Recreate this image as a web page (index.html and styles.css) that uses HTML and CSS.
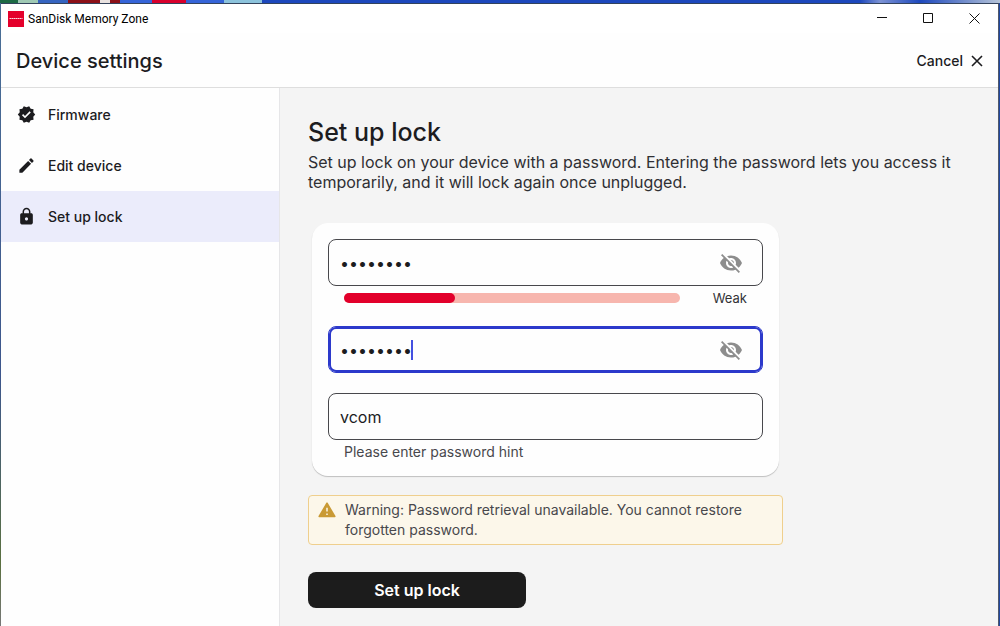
FILE: index.html
```html
<!DOCTYPE html>
<html lang="en">
<head>
<meta charset="utf-8">
<meta name="viewport" content="width=device-width, initial-scale=1">
<title>SanDisk Memory Zone</title>
<link rel="stylesheet" href="styles.css">
</head>
<body>
<div class="desktop">
  <div class="window">
    <div class="titlebar">
      <svg class="app-logo" viewBox="0 0 16 16" aria-hidden="true"><path fill="#e4002b" d="M0 0h16v16H0z"/><path stroke="#fff" stroke-opacity=".85" stroke-width="1.2" stroke-dasharray="1.6 .4" d="M1.500 7.500h13"/></svg>
      <span class="app-name">SanDisk Memory Zone</span>
      <div class="window-controls">
        <button class="window-button" type="button" aria-label="Minimize"><svg viewBox="0 0 11 11"><path d="M0 4.500h10"/></svg></button>
        <button class="window-button" type="button" aria-label="Maximize"><svg viewBox="0 0 11 11"><path d="M.5.5h9v9h-9z"/></svg></button>
        <button class="window-button" type="button" aria-label="Close"><svg viewBox="0 0 11 11"><path d="M.5.5l10 10M10.500.5l-10 10"/></svg></button>
      </div>
    </div>
    <header class="header">
      <h1 class="header-title">Device settings</h1>
      <button class="cancel" type="button">Cancel<svg viewBox="0 0 12 12" aria-hidden="true"><path d="M1 1l10 10M11 1L1 11"/></svg></button>
    </header>
    <div class="body">
      <nav class="sidebar">
        <a class="nav-item" href="#firmware"><svg viewBox="0 0 24 24" aria-hidden="true"><path d="M23 12l-2.440-2.790.34-3.690-3.610-.82-1.890-3.200L12 2.960 8.600 1.500 6.710 4.690 3.100 5.500l.34 3.700L1 12l2.440 2.790-.34 3.700 3.610.82L8.600 22.500l3.400-1.470 3.400 1.460 1.890-3.190 3.610-.82-.34-3.690L23 12zm-12.910 4.720l-3.800-3.810 1.480-1.480 2.320 2.330 5.850-5.870 1.480 1.480-7.330 7.350z"/></svg>Firmware</a>
        <a class="nav-item" href="#edit"><svg viewBox="0 0 24 24" aria-hidden="true"><path d="M3 17.250V21h3.750L17.810 9.940l-3.750-3.750L3 17.250zM20.710 7.040a1 1 0 000-1.410l-2.340-2.340a1 1 0 00-1.410 0l-1.830 1.830 3.750 3.750 1.830-1.830z"/></svg>Edit device</a>
        <a class="nav-item selected" href="#lock" aria-current="page"><svg viewBox="0 0 24 24" aria-hidden="true"><path d="M18 8h-1V6c0-2.760-2.240-5-5-5S7 3.240 7 6v2H6c-1.100 0-2 .9-2 2v10c0 1.100.9 2 2 2h12c1.100 0 2-.9 2-2V10c0-1.100-.9-2-2-2zm-6 9c-1.100 0-2-.9-2-2s.9-2 2-2 2 .9 2 2-.9 2-2 2zm3.100-9H8.900V6c0-1.710 1.390-3.100 3.100-3.100s3.100 1.390 3.100 3.100v2z"/></svg>Set up lock</a>
      </nav>
      <main class="main">
        <h2 class="title">Set up lock</h2>
        <p class="intro">Set up lock on your device with a password. Entering the password lets you access it temporarily, and it will lock again once unplugged.</p>
        <form class="form">
          <div class="card">
            <div class="field">
              <input class="input" type="password" value="password" aria-label="Password">
              <button class="reveal" type="button" aria-label="Show password"><svg viewBox="0 0 24 24"><path d="M12 7c2.760 0 5 2.240 5 5 0 .65-.13 1.260-.36 1.830l2.920 2.920c1.510-1.260 2.700-2.890 3.430-4.750-1.730-4.390-6-7.500-11-7.500-1.400 0-2.740.25-3.980.7l2.160 2.160C10.740 7.130 11.350 7 12 7zM2 4.270l2.280 2.280.46.46C3.080 8.300 1.780 10.020 1 12c1.730 4.390 6 7.500 11 7.500 1.550 0 3.030-.3 4.380-.84l.42.42L19.730 22 21 20.730 3.270 3 2 4.270zM7.530 9.800l1.550 1.550c-.05.21-.08.43-.08.65 0 1.660 1.340 3 3 3 .22 0 .44-.03.65-.08l1.550 1.550c-.67.33-1.410.53-2.200.53-2.760 0-5-2.240-5-5 0-.79.2-1.530.53-2.200zm4.310-.78l3.150 3.150.02-.16c0-1.660-1.340-3-3-3l-.17.01z"/></svg></button>
            </div>
            <div class="strength">
              <div class="meter" role="meter" aria-label="Password strength" aria-valuemin="0" aria-valuemax="3" aria-valuenow="1"><div class="meter-fill" style="width:33%"></div></div>
              <span class="strength-label">Weak</span>
            </div>
            <div class="field focused">
              <input class="input" type="password" value="password" aria-label="Confirm password">
              <span class="caret"></span>
              <button class="reveal" type="button" aria-label="Show password"><svg viewBox="0 0 24 24"><path d="M12 7c2.760 0 5 2.240 5 5 0 .65-.13 1.260-.36 1.830l2.920 2.920c1.510-1.260 2.700-2.890 3.430-4.750-1.730-4.390-6-7.500-11-7.500-1.400 0-2.740.25-3.980.7l2.160 2.160C10.740 7.130 11.350 7 12 7zM2 4.270l2.280 2.280.46.46C3.080 8.300 1.780 10.020 1 12c1.730 4.390 6 7.500 11 7.500 1.550 0 3.030-.3 4.380-.84l.42.42L19.730 22 21 20.730 3.270 3 2 4.270zM7.530 9.800l1.550 1.550c-.05.21-.08.43-.08.65 0 1.660 1.340 3 3 3 .22 0 .44-.03.65-.08l1.550 1.550c-.67.33-1.410.53-2.200.53-2.760 0-5-2.240-5-5 0-.79.2-1.530.53-2.200zm4.310-.78l3.150 3.150.02-.16c0-1.660-1.340-3-3-3l-.17.01z"/></svg></button>
            </div>
            <div class="field hint">
              <input class="input" id="hint" type="text" value="vcom">
            </div>
            <label class="helper" for="hint">Please enter password hint</label>
          </div>
          <div class="warning">
            <svg viewBox="0 0 24 24" aria-hidden="true"><path d="M1.500 21.500c-.8 0-1.200-.7-.8-1.400l10.200-17.400c.5-.8 1.700-.8 2.200 0l10.200 17.400c.4.7 0 1.400-.8 1.400zM11 9v5h2V9zm0 7.500v2h2v-2z" fill-rule="evenodd"/></svg>
            <p class="warning-text">Warning: Password retrieval unavailable. You cannot restore forgotten password.</p>
          </div>
          <button class="submit" type="button">Set up lock</button>
        </form>
      </main>
    </div>
  </div>
</div>
</body>
</html>
```
FILE: styles.css
```css
* { box-sizing: border-box; }

body {
  margin: 0;
  font-family: Inter, "Liberation Sans", sans-serif;
  font-size: 16px;
  color: #1c1c1f;
}

button, input { font: inherit; color: inherit; }
button { border: 0; padding: 0; background: none; }
h1, h2, p { margin: 0; }
svg { display: block; flex: none; }

.desktop {
  min-height: 100vh;
  display: flex;
  padding: 3px 1px 0 0;
  background:
    linear-gradient(90deg, #1d6b45 0 18px, #9fc9b4 18px 38px, #3564c0 38px 68px, #8c1018 68px 100px, #e9e2e0 100px 110px, #8c1018 110px 120px, #3564d8 120px 152px, #d8002c 152px 186px, #3564d8 186px 224px, #8cc3dc 224px 262px, #1d48bd 262px 860px, #7d93d4 880px, #1d48bd 920px, #b6c4d8 100%) top / 100% 3px no-repeat,
    linear-gradient(#4a6f96, #3d568c 60%, #5a7040 90%, #777) left / 2px 100% no-repeat,
    #1f479f;
}

.window {
  flex: 1;
  min-width: 0;
  display: flex;
  flex-direction: column;
  margin-left: 1px;
  border-top: 1px solid #33435c;
  border-right: 1px solid #50586a;
  background: #fefefe;
}

.titlebar {
  display: flex;
  align-items: center;
  height: 29px;
  padding-left: 7px;
  background: #fff;
}

.app-logo { width: 16px; height: 16px; }

.app-name {
  margin-left: 4px;
  font: 12px/16px Roboto, sans-serif;
  color: #000;
}

.window-controls { display: flex; margin-left: auto; padding-right: 1px; }

.window-button {
  display: grid;
  place-items: center;
  width: 46px;
  height: 28px;
}

.window-button svg {
  width: 11px;
  height: 11px;
  fill: none;
  stroke: #111;
}

.header {
  display: flex;
  align-items: center;
  justify-content: space-between;
  height: 55px;
  padding: 1px 15px 0 15px;
  border-bottom: 1px solid #dedede;
}

.header-title { font-size: 20px; line-height: 24px; font-weight: 500; }

.cancel {
  display: flex;
  align-items: center;
  gap: 8px;
  font-size: 14px;
  font-weight: 500;
}

.cancel svg { width: 12px; height: 12px; fill: none; stroke: #1c1c1f; stroke-width: 1.6; }

.body { flex: 1; display: flex; }

.sidebar {
  flex: none;
  width: 279px;
  padding-top: 1px;
  border-right: 1px solid #e6e6e8;
}

.nav-item {
  display: flex;
  align-items: center;
  gap: 12px;
  height: 51px;
  padding-left: 16px;
  font-size: 14px;
  font-weight: 500;
  color: #1c1c1f;
  text-decoration: none;
}

.nav-item svg { width: 19px; height: 19px; fill: #1c1c1f; }
.selected { background: #ebecfb; }

.main {
  flex: 1;
  min-width: 0;
  padding: 29px 28px 18px;
  background: #f4f4f4;
}

.title { font-size: 25px; line-height: 30px; font-weight: 500; }

.intro {
  max-width: 660px;
  margin-top: 5px;
  line-height: 20px;
  color: #2f2f33;
}

.form { max-width: 475px; margin-top: 31px; }

.card {
  margin: 0 4px;
  padding: 16px 16px 15px;
  border-radius: 16px;
  background: #fefefe;
  box-shadow: 0 1px 1px #00000038;
}

.field {
  position: relative;
  display: flex;
  align-items: center;
  height: 47px;
  padding-right: 19px;
  border: 1px solid #48484c;
  border-radius: 8px;
}

.focused { border-color: #2c39cb; box-shadow: inset 0 0 0 2px #2c39cb; }
.hint { margin-top: 20px; }

.input {
  flex: 1;
  min-width: 0;
  padding: 0 11px;
  border: 0;
  outline: 0;
  background: transparent;
  line-height: 20px;
}

.caret {
  position: absolute;
  left: 82px;
  width: 2px;
  height: 20px;
  background: #4450e0;
}

.reveal svg { width: 24px; height: 24px; fill: #8d8d8d; }

.strength {
  display: flex;
  align-items: center;
  justify-content: space-between;
  height: 40px;
  padding: 0 16px 16px;
}

.meter {
  flex: 0 1 336px;
  height: 10px;
  border-radius: 5px;
  background: #f7b6ae;
}

.meter-fill { height: 100%; border-radius: 5px; background: #e2002b; }
.strength-label { font-size: 13px; color: #333336; }

.helper {
  display: block;
  margin-top: 3px;
  padding-left: 16px;
  font-size: 14px;
  line-height: 18px;
  color: #48484c;
}

.warning {
  display: flex;
  gap: 9px;
  margin-top: 19px;
  padding: 4px 20px 4px 9px;
  border: 1px solid #efcf8d;
  border-radius: 4px;
  background: #fcf7ea;
}

.warning svg { width: 18px; height: 18px; margin-top: 1px; fill: #c99a35; }
.warning-text { font-size: 14px; line-height: 20px; color: #48484c; }

.submit {
  width: 218px;
  height: 36px;
  margin-top: 27px;
  border-radius: 8px;
  background: #1c1c1c;
  color: #fff;
  font-weight: 600;
}
```
